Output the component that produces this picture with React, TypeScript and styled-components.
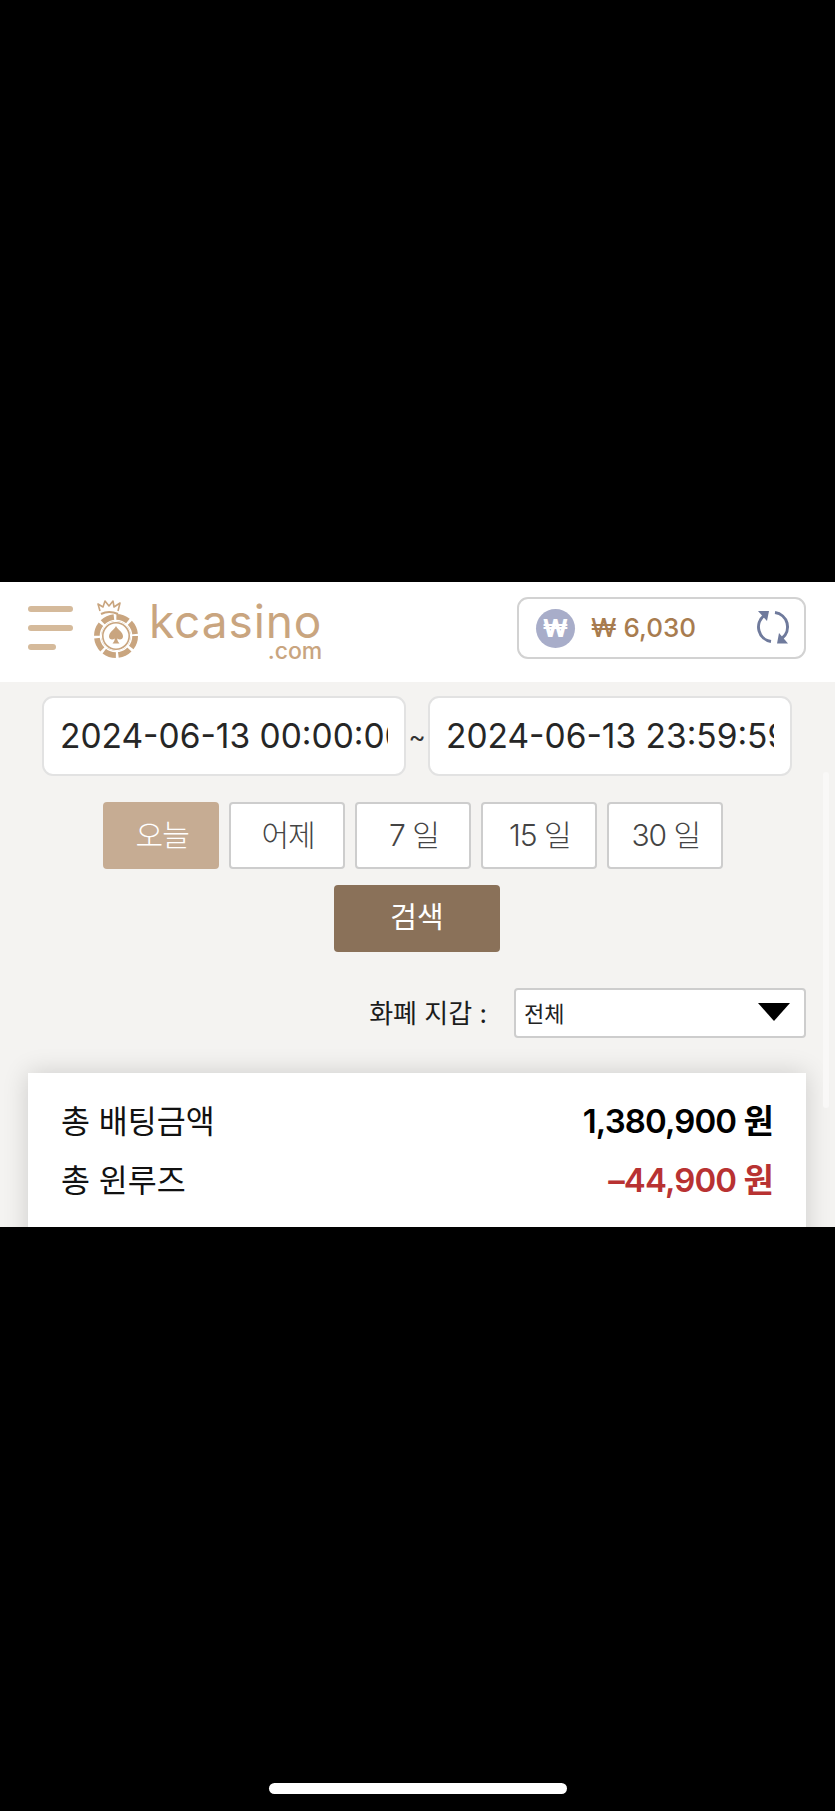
import styled, { createGlobalStyle } from 'styled-components';

const GlobalStyle = createGlobalStyle`
  html, body {
    margin: 0;
    padding: 0;
    background: #000;
  }
  * {
    box-sizing: border-box;
  }
`;

const FONT = `Inter, "Noto Sans CJK KR", sans-serif`;
const periods = ['오늘', '어제', '7 일', '15 일', '30 일'];

function ChipLogo() {
  return (
    <svg width="48" height="60" viewBox="0 0 48 60" fill="none">
      {/* crown */}
      <path d="M7 13 L5 6 L10 9 L12 3 L16 8 L20 3 L21 9 L27 5 L25 13" stroke="#c9a57f" strokeWidth="1.6" strokeLinejoin="round" />
      <path d="M8 16 Q16 12 25 16" stroke="#c9a57f" strokeWidth="2" />
      {/* chip */}
      <circle cx="23" cy="38" r="18.5" stroke="#c9a57f" strokeWidth="7" strokeDasharray="12 2.5" />
      <circle cx="23" cy="38" r="13.2" stroke="#c9a57f" strokeWidth="1.6" />
      <circle cx="23" cy="38" r="15.6" stroke="#fff" strokeWidth="1.4" />
      {/* spade */}
      <path d="M23 28 C25 32 30 34 30 38.5 C30 41.5 26.5 42.5 24.2 40.5 C24.4 42.5 25 44 26.5 45.5 L19.5 45.5 C21 44 21.6 42.5 21.8 40.5 C19.5 42.5 16 41.5 16 38.5 C16 34 21 32 23 28 Z" fill="#c9a57f" />
    </svg>
  );
}

function RefreshIcon() {
  return (
    <svg width="36" height="36" viewBox="0 0 36 36" fill="none">
      <path d="M9 5.7 A14.5 14.5 0 0 0 16 31.4" stroke="#6f7a9c" strokeWidth="3" />
      <path d="M20 2.6 A14.5 14.5 0 0 1 27 28.4" stroke="#6f7a9c" strokeWidth="3" />
      <path d="M3 1 H14 L12 11 Z" fill="#6f7a9c" />
      <path d="M22 33.5 H33 L24 23 Z" fill="#6f7a9c" />
    </svg>
  );
}

export default function App() {
  return (
    <Page>
      <GlobalStyle />
      <Screen>
        <Header>
          <Brand>
            <MenuButton>
              <MenuBar />
              <MenuBar />
              <MenuBar $short />
            </MenuButton>
            <ChipLogo />
            <LogoText>
              <LogoWord>kcasino</LogoWord>
              <LogoDomain>.com</LogoDomain>
            </LogoText>
          </Brand>
          <Balance>
            <CoinBadge>₩</CoinBadge>
            <BalanceAmount>₩ 6,030</BalanceAmount>
            <RefreshIcon />
          </Balance>
        </Header>

        <Content>
          <DateRow>
            <DateInput readOnly value="2024-06-13 00:00:00" />
            <Tilde>~</Tilde>
            <DateInput readOnly value="2024-06-13 23:59:59" />
          </DateRow>

          <PeriodRow>
            {periods.map((label, i) => (
              <PeriodButton key={label} $active={i === 0}>{label}</PeriodButton>
            ))}
          </PeriodRow>

          <SearchButton>검색</SearchButton>

          <WalletRow>
            <WalletLabel>화폐 지갑 :</WalletLabel>
            <WalletSelect>
              전체
              <Caret />
            </WalletSelect>
          </WalletRow>

          <SummaryCard>
            <SummaryRow>
              <SummaryLabel>총 배팅금액</SummaryLabel>
              <SummaryValue>1,380,900 원</SummaryValue>
            </SummaryRow>
            <SummaryRow>
              <SummaryLabel>총 윈루즈</SummaryLabel>
              <SummaryValue $negative>–44,900 원</SummaryValue>
            </SummaryRow>
          </SummaryCard>
        </Content>

        <ScrollThumb />
      </Screen>

      <BottomBar>
        <HomeIndicator />
      </BottomBar>
    </Page>
  );
}

const Page = styled.div`
  width: 835px;
  height: 1811px;
  padding-top: 582px;
  background: #000;
  font-family: ${FONT};
  overflow: hidden;
`;

const Screen = styled.div`
  position: relative;
  height: 645px;
  background: #f4f3f1;
  overflow: hidden;
`;

const Header = styled.header`
  height: 100px;
  padding: 0 29px 8px 28px;
  background: #fff;
  display: flex;
  align-items: center;
  justify-content: space-between;
`;

const Brand = styled.div`
  display: flex;
  align-items: center;
`;

const MenuButton = styled.div`
  width: 45px;
  margin-right: 20px;
  display: flex;
  flex-direction: column;
  gap: 13px;
`;

const MenuBar = styled.span<{ $short?: boolean }>`
  display: block;
  width: ${(p) => (p.$short ? '28px' : '45px')};
  height: 6px;
  border-radius: 3px;
  background: #d5ba9b;
`;

const LogoText = styled.div`
  margin-left: 8px;
  margin-top: 3px;
  display: flex;
  flex-direction: column;
  align-items: flex-end;
  color: #c9a57f;
  font-family: Inter, sans-serif;
`;

const LogoWord = styled.span`
  font-size: 46px;
  font-weight: 400;
  line-height: 42px;
  letter-spacing: 0.9px;
`;

const LogoDomain = styled.span`
  font-size: 23px;
  line-height: 18px;
  font-weight: 500;
`;

const Balance = styled.div`
  width: 289px;
  height: 62px;
  padding: 0 13px 0 17px;
  background: #fff;
  border: 2px solid #d2d2d2;
  border-radius: 11px;
  display: flex;
  align-items: center;
`;

const CoinBadge = styled.span`
  width: 39px;
  height: 39px;
  margin-right: 16px;
  border-radius: 50%;
  background: #a8adc9;
  color: #fff;
  font-size: 24px;
  font-weight: 800;
  display: flex;
  align-items: center;
  justify-content: center;
`;

const BalanceAmount = styled.span`
  flex: 1;
  padding-bottom: 2px;
  font-size: 26px;
  font-weight: 500;
  color: #a87c4f;
`;

const Content = styled.main`
  padding: 14px 29px 0 28px;
  display: flex;
  flex-direction: column;
  align-items: center;
`;

const DateRow = styled.div`
  width: 100%;
  padding: 0 14px;
  display: flex;
  align-items: center;
  justify-content: space-between;
`;

const DateInput = styled.input`
  width: 364px;
  height: 80px;
  padding: 0 16px;
  background: #fff;
  border: 2px solid #e2e2e2;
  border-radius: 11px;
  outline: none;
  color: #262626;
  font-family: ${FONT};
  font-size: 33.5px;
`;

const Tilde = styled.span`
  font-size: 26px;
  color: #333;
`;

const PeriodRow = styled.div`
  align-self: flex-start;
  margin: 26px 0 0 75px;
  display: flex;
  gap: 9.5px;
`;

const PeriodButton = styled.button<{ $active?: boolean }>`
  width: 116.4px;
  height: 67px;
  padding: 0 0 6px 2px;
  background: ${(p) => (p.$active ? '#c6ac93' : '#fff')};
  border: 2px solid ${(p) => (p.$active ? '#c6ac93' : '#cdcdcd')};
  border-radius: 4px;
  color: ${(p) => (p.$active ? '#fff' : '#444')};
  font-family: ${FONT};
  font-size: 30px;
  font-weight: 300;
  letter-spacing: -1px;
`;

const SearchButton = styled.button`
  width: 166px;
  height: 67px;
  margin-top: 16px;
  padding: 0 0 7px;
  background: #8a7159;
  border: none;
  border-radius: 4px;
  color: #fff;
  font-family: ${FONT};
  font-size: 29px;
  font-weight: 400;
`;

const WalletRow = styled.div`
  width: 100%;
  margin-top: 36px;
  display: flex;
  align-items: center;
  justify-content: flex-end;
  gap: 27px;
`;

const WalletLabel = styled.span`
  font-size: 26px;
  color: #1c1c1c;
  padding-bottom: 3px;
`;

const WalletSelect = styled.div`
  width: 292px;
  height: 50px;
  padding: 0 14px 3px 8px;
  background: #fff;
  border: 2px solid #cdcdcd;
  border-radius: 4px;
  color: #222;
  font-size: 22px;
  display: flex;
  align-items: center;
  justify-content: space-between;
`;

const Caret = styled.span`
  width: 0;
  height: 0;
  border-left: 16px solid transparent;
  border-right: 16px solid transparent;
  border-top: 18px solid #000;
`;

const SummaryCard = styled.section`
  width: 100%;
  height: 190px;
  flex-shrink: 0;
  margin-top: 35px;
  padding: 16px 33px 0;
  background: #fff;
  box-shadow: 0 0 24px rgba(0, 0, 0, 0.16);
  display: flex;
  flex-direction: column;
`;

const SummaryRow = styled.div`
  height: 59px;
  display: flex;
  align-items: center;
  justify-content: space-between;
`;

const SummaryLabel = styled.span`
  font-size: 31.5px;
  color: #111;
`;

const SummaryValue = styled.span<{ $negative?: boolean }>`
  font-size: 33px;
  font-weight: 600;
  letter-spacing: -0.9px;
  color: ${(p) => (p.$negative ? '#b83232' : '#000')};
`;

const ScrollThumb = styled.div`
  position: absolute;
  top: 190px;
  right: 6px;
  width: 6px;
  height: 336px;
  border-radius: 3px;
  background: #f9f8f7;
`;

const BottomBar = styled.div`
  padding-top: 556px;
  display: flex;
  justify-content: center;
`;

const HomeIndicator = styled.div`
  width: 298px;
  height: 11px;
  border-radius: 6px;
  background: #fff;
`;
